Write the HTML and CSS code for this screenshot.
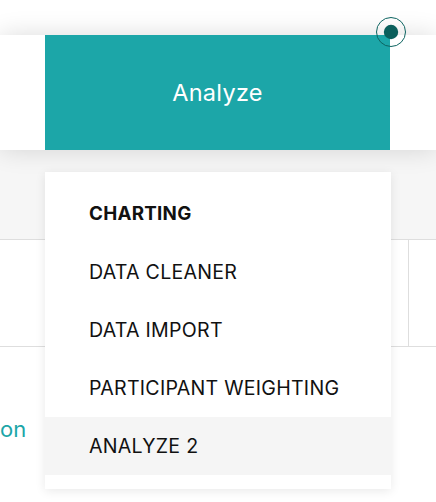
FILE: index.html
```html
<!DOCTYPE html>
<html>
<head>
<meta charset="utf-8">
<link rel="stylesheet" href="styles.css">
</head>
<body>
<div class="page">
  <div class="topbar"></div>
  <nav class="nav">
    <div class="nav-btn">Analyze</div>
  </nav>
  <div class="band"></div>
  <div class="row">
    <div class="cell"></div>
    <div class="cell cell-end"></div>
  </div>
  <div class="content">
    <span class="link">on</span>
  </div>

  <ul class="dropdown">
    <li class="item item-head">CHARTING</li>
    <li class="item">DATA CLEANER</li>
    <li class="item">DATA IMPORT</li>
    <li class="item">PARTICIPANT WEIGHTING</li>
    <li class="item item-active">ANALYZE 2</li>
  </ul>

  <svg class="marker" width="32" height="32" viewBox="0 0 32 32">
    <circle cx="16" cy="16" r="14.5" fill="none" stroke="#0d6461" stroke-width="1"/>
    <circle cx="16" cy="16" r="7.2" fill="#0b5f5c"/>
  </svg>
</div>
</body>
</html>
```
FILE: styles.css
```css
* { box-sizing: border-box; }
html, body { margin: 0; padding: 0; background: #fff; }
body { font-family: Inter, "Noto Sans", sans-serif; width: 436px; height: 502px; overflow: hidden; }
.page { position: relative; width: 436px; height: 502px; }
.topbar { height: 35px; background: #fff; }
.nav {
  position: relative;
  z-index: 2;
  height: 115px;
  background: #fff;
  padding-left: 45px;
  display: flex;
  box-shadow: 0 0 24px rgba(0,0,0,0.14);
}
.nav-btn {
  width: 345px;
  background: #1ca6a8;
  color: #fff;
  font-size: 23.5px;
  letter-spacing: 0.3px;
  display: flex;
  align-items: center;
  justify-content: center;
}
.band { height: 90px; background: #f6f6f6; border-bottom: 1px solid #dedede; }
.row {
  height: 107px;
  display: grid;
  grid-template-columns: 408px 1fr;
  border-bottom: 1px solid #dedede;
}
.cell-end { border-left: 1px solid #dedede; }
.content { padding-top: 68px; }
.link { color: #1ca6a8; font-size: 22px; line-height: 28px; }
.dropdown {
  position: absolute;
  z-index: 3;
  top: 172px;
  left: 45px;
  width: 346px;
  margin: 0;
  padding: 13px 0 14px;
  list-style: none;
  background: #fff;
  box-shadow: 0 2px 10px rgba(0,0,0,0.09);
}
.item {
  height: 58px;
  line-height: 58px;
  padding-left: 44px;
  font-size: 19.6px;
  letter-spacing: 0.25px;
  color: #111;
}
.item-head { font-weight: 700; font-size: 18.8px; }
.item-active { background: #f5f5f5; }
.marker { position: absolute; z-index: 4; left: 375px; top: 16px; }
```
